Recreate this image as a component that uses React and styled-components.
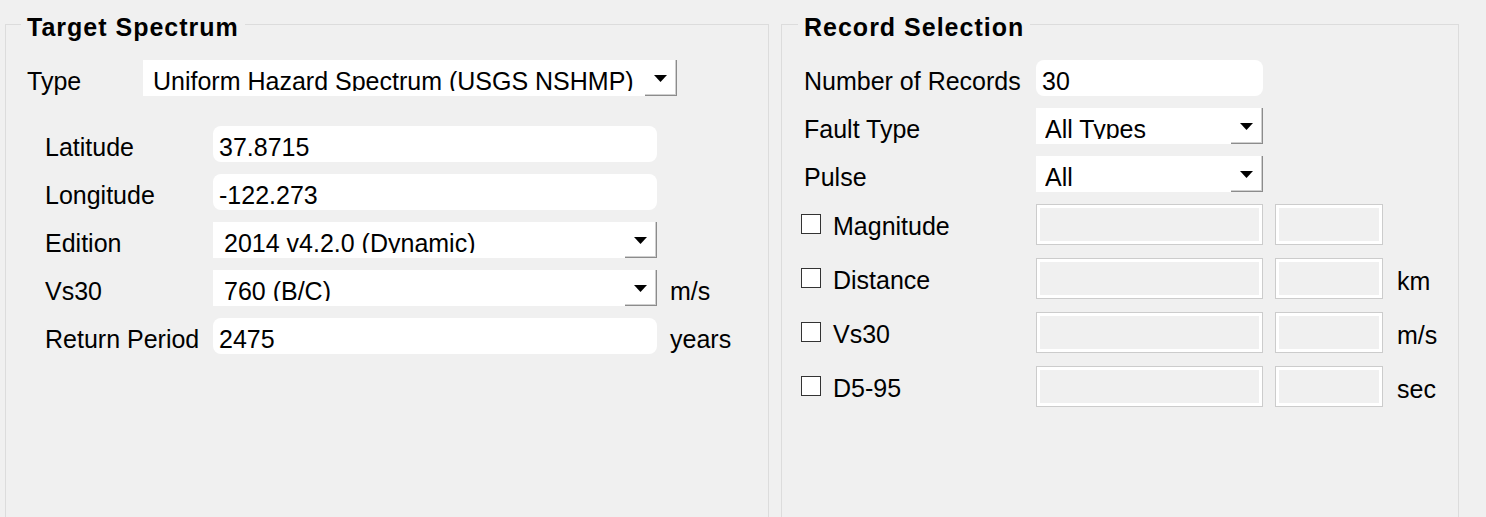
import React from "react";
import styled, { createGlobalStyle } from "styled-components";

const GlobalStyle = createGlobalStyle`
  html, body {
    margin: 0;
    padding: 0;
    overflow: hidden;
    background: #f0f0f0;
  }
  body {
    font-family: "Liberation Sans", Arial, sans-serif;
    font-size: 25px;
    color: #000;
  }
`;

const Page = styled.div`
  display: flex;
  gap: 12px;
  padding: 6px 0 0 5px;
  height: 100vh;
  box-sizing: border-box;
`;

const GroupBox = styled.fieldset`
  flex: none;
  margin: 0;
  padding: 0;
  width: ${(p) => p.$width}px;
  min-height: 560px;
  border: 1px solid #dcdcdc;
  box-sizing: border-box;
`;

const Legend = styled.legend`
  margin-left: ${(p) => p.$offset}px;
  padding: 7px 6px 0;
  font-weight: bold;
  line-height: 29px;
  letter-spacing: 1px;
`;

const Body = styled.div`
  display: flex;
  flex-direction: column;
  padding: 18px 0 0 ${(p) => p.$indent}px;
`;

const Label = styled.span`
  padding-top: 7px;
  line-height: 28px;
  white-space: nowrap;
`;

const TypeRow = styled.div`
  display: grid;
  grid-template-columns: 116px 534px;
  height: 36px;
`;

const SubRows = styled.div`
  display: flex;
  flex-direction: column;
  gap: 12px;
  margin-top: 30px;
  padding-left: 18px;
`;

const SubRow = styled.div`
  display: grid;
  grid-template-columns: 168px 444px auto;
  height: 36px;
`;

const LineEdit = styled.div`
  height: 36px;
  padding: 7px 6px 0;
  box-sizing: border-box;
  background: #fff;
  border-radius: 8px;
  line-height: 28px;
  white-space: nowrap;
  overflow: hidden;
`;

const Combo = styled.div`
  display: flex;
  height: 36px;
  background: #fff;
`;

const ComboValue = styled.div`
  flex: 1;
  min-width: 0;
  padding-left: ${(p) => p.$pad || 10}px;
`;

const ComboText = styled.div`
  margin-top: 7px;
  height: 24px;
  line-height: 28px;
  white-space: nowrap;
  overflow: hidden;
`;

const DropButton = styled.div`
  flex: none;
  display: flex;
  align-items: center;
  justify-content: center;
  width: 32px;
  box-sizing: border-box;
  border-right: 1px solid #8c8c8c;
  border-bottom: 1px solid #8c8c8c;
  box-shadow: inset -1px -1px 0 #cfcfcf;
  padding-top: 1px;
`;

const Arrow = () => (
  <svg width="13" height="7" viewBox="0 0 13 7">
    <polygon points="0,0 13,0 6.5,7" fill="#000" />
  </svg>
);

const Section = styled.div`
  display: flex;
  flex-direction: column;
  gap: ${(p) => p.$gap}px;
  margin-top: ${(p) => p.$top || 0}px;
`;

const RecordRow = styled.div`
  display: grid;
  grid-template-columns: 232px 227px 120px auto;
  height: ${(p) => p.$height}px;
`;

const CheckLabel = styled.label`
  display: flex;
  align-items: flex-start;
  margin-left: -3px;
`;

const CheckBox = styled.span`
  flex: none;
  width: 20px;
  height: 20px;
  margin: 10px 12px 0 0;
  box-sizing: border-box;
  border: 1px solid #333;
  background: #fff;
`;

const CheckText = styled.span`
  padding-top: 8px;
  line-height: 28px;
`;

const DisabledInput = styled.div`
  height: 41px;
  margin-left: ${(p) => p.$offset || 0}px;
  box-sizing: border-box;
  border: 1px solid #cccccc;
  background: #f0f0f0;
  box-shadow: inset 0 0 0 3px #fff;
`;

const Unit = styled.span`
  padding-top: ${(p) => p.$top || 7}px;
  margin-left: ${(p) => p.$shift || 0}px;
  line-height: 28px;
`;

const ComboBox = ({ value, pad }) => (
  <Combo>
    <ComboValue $pad={pad}>
      <ComboText>{value}</ComboText>
    </ComboValue>
    <DropButton>
      <Arrow />
    </DropButton>
  </Combo>
);

const spectrumRows = [
  { label: "Latitude", value: "37.8715" },
  { label: "Longitude", value: "-122.273" },
  { label: "Edition", value: "2014 v4.2.0 (Dynamic)", combo: true },
  { label: "Vs30", value: "760 (B/C)", combo: true, unit: "m/s" },
  { label: "Return Period", value: "2475", unit: "years" },
];

const filters = [
  { label: "Magnitude" },
  { label: "Distance", unit: "km" },
  { label: "Vs30", unit: "m/s" },
  { label: "D5-95", unit: "sec" },
];

export default function App() {
  return (
    <>
      <GlobalStyle />
      <Page>
        <GroupBox $width={764}>
          <Legend $offset={15}>Target Spectrum</Legend>
          <Body $indent={21}>
            <TypeRow>
              <Label>Type</Label>
              <ComboBox value="Uniform Hazard Spectrum (USGS NSHMP)" />
            </TypeRow>
            <SubRows>
              {spectrumRows.map((row) => (
                <SubRow key={row.label}>
                  <Label>{row.label}</Label>
                  {row.combo ? (
                    <ComboBox value={row.value} pad={11} />
                  ) : (
                    <LineEdit>{row.value}</LineEdit>
                  )}
                  {row.unit && <Unit $shift={13}>{row.unit}</Unit>}
                </SubRow>
              ))}
            </SubRows>
          </Body>
        </GroupBox>

        <GroupBox $width={678}>
          <Legend $offset={16}>Record Selection</Legend>
          <Body $indent={22}>
            <Section $gap={12}>
              <RecordRow $height={36}>
                <Label>Number of Records</Label>
                <LineEdit>30</LineEdit>
              </RecordRow>
              <RecordRow $height={36}>
                <Label>Fault Type</Label>
                <ComboBox value="All Types" pad={9} />
              </RecordRow>
              <RecordRow $height={36}>
                <Label>Pulse</Label>
                <ComboBox value="All" pad={9} />
              </RecordRow>
            </Section>
            <Section $gap={13} $top={12}>
              {filters.map((f) => (
                <RecordRow $height={41} key={f.label}>
                  <CheckLabel>
                    <CheckBox />
                    <CheckText>{f.label}</CheckText>
                  </CheckLabel>
                  <DisabledInput />
                  <DisabledInput $offset={12} />
                  {f.unit && (
                    <Unit $top={9} $shift={14}>
                      {f.unit}
                    </Unit>
                  )}
                </RecordRow>
              ))}
            </Section>
          </Body>
        </GroupBox>
      </Page>
    </>
  );
}
